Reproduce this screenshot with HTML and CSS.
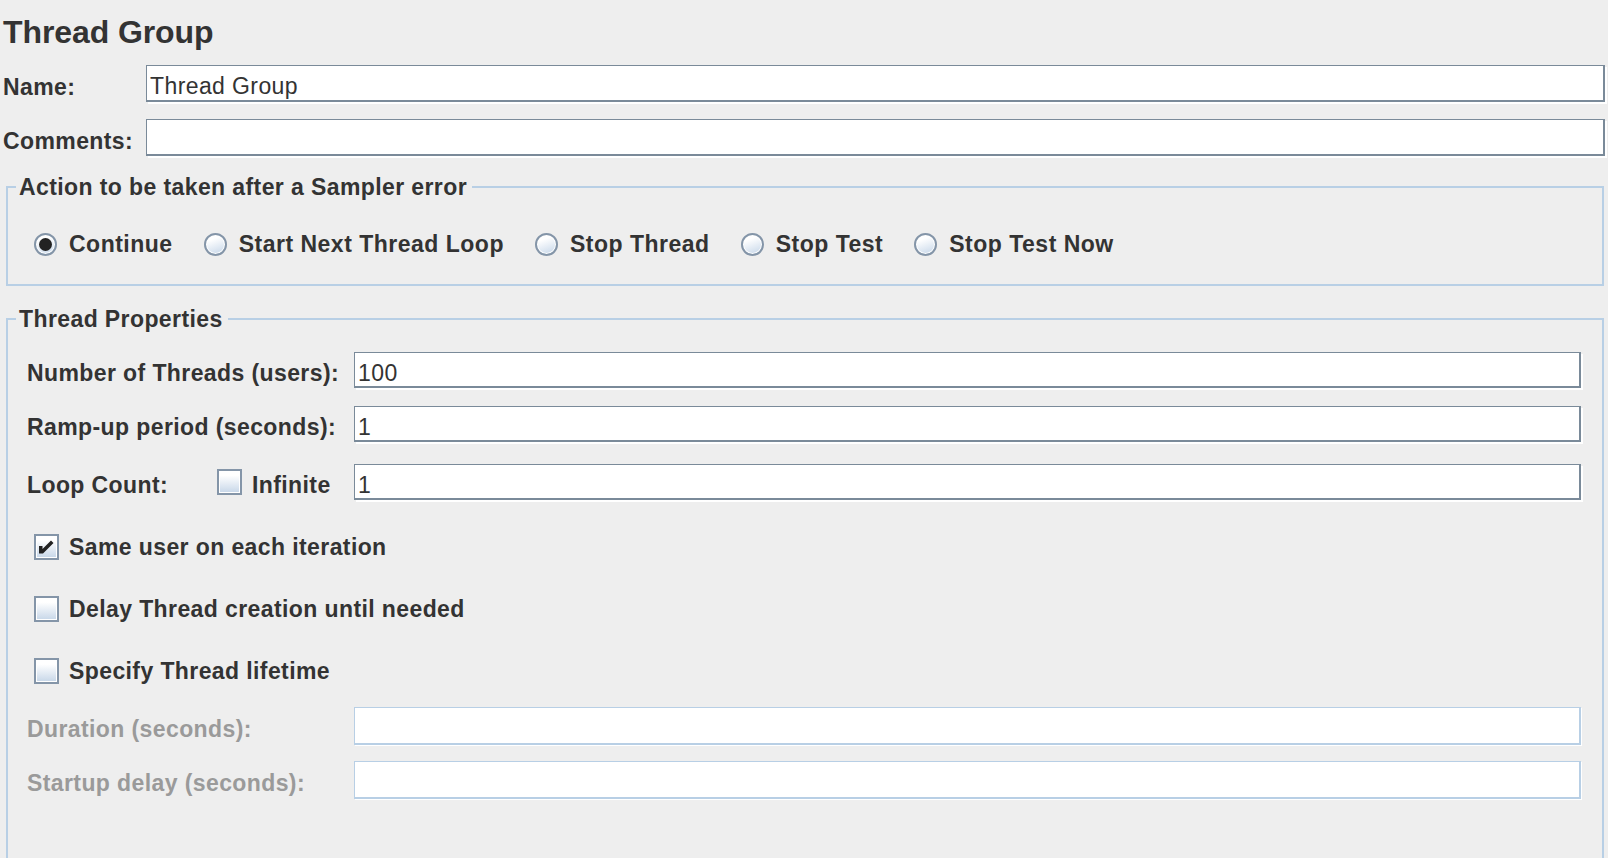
FILE: index.html
```html
<!DOCTYPE html>
<html>
<head>
  <meta charset="UTF-8">
  <title>Thread Group</title>
  <link rel="stylesheet" href="styles.css">
</head>
<body>
  <div class="panel">
    <!-- 标题 -->
    <h1 class="panel-title">Thread Group</h1>

    <div class="name-row">
      <label class="name-label">Name:</label>
      <input type="text" class="text-field" value="Thread Group">
    </div>
    <div class="name-row comments-row">
      <label class="name-label">Comments:</label>
      <input type="text" class="text-field" value="">
    </div>

    <!-- 取样器错误后的动作 -->
    <fieldset class="group action-group">
      <legend>Action to be taken after a Sampler error</legend>
      <div class="radio-row">
        <span class="radio-item"><span class="radio checked"></span>Continue</span>
        <span class="radio-item"><span class="radio"></span>Start Next Thread Loop</span>
        <span class="radio-item"><span class="radio"></span>Stop Thread</span>
        <span class="radio-item"><span class="radio"></span>Stop Test</span>
        <span class="radio-item"><span class="radio"></span>Stop Test Now</span>
      </div>
    </fieldset>

    <!-- 线程属性 -->
    <fieldset class="group props-group">
      <legend>Thread Properties</legend>
      <div class="props-body">
        <div class="field-row">
          <label class="field-label">Number of Threads (users):</label>
          <input type="text" class="text-field" value="100">
        </div>
        <div class="field-row ramp-row">
          <label class="field-label">Ramp-up period (seconds):</label>
          <input type="text" class="text-field" value="1">
        </div>
        <div class="field-row loop-row">
          <div class="field-label loop-label">
            <span class="loop-text">Loop Count:</span>
            <span class="checkbox"></span>
            <span class="infinite-text">Infinite</span>
          </div>
          <input type="text" class="text-field" value="1">
        </div>

        <div class="check-row first-check">
          <span class="checkbox">
            <svg width="21" height="22" viewBox="0 0 21 22"><polygon points="3,10 6.5,10 6.5,13 15,4.5 17.5,7 7,17.5 3,17.5" fill="#222"/></svg>
          </span>
          Same user on each iteration
        </div>
        <div class="check-row">
          <span class="checkbox"></span>
          Delay Thread creation until needed
        </div>
        <div class="check-row">
          <span class="checkbox"></span>
          Specify Thread lifetime
        </div>

        <div class="field-row disabled duration-row">
          <label class="field-label">Duration (seconds):</label>
          <input type="text" class="text-field" value="" disabled>
        </div>
        <div class="field-row disabled startup-row">
          <label class="field-label">Startup delay (seconds):</label>
          <input type="text" class="text-field" value="" disabled>
        </div>
      </div>
    </fieldset>
  </div>
</body>
</html>
```

FILE: styles.css
```css
html, body {
  margin: 0;
  padding: 0;
  height: 100%;
  overflow: hidden;
}

body {
  background-color: #eeeeee;
  color: #333333;
  font-family: "Liberation Sans", Arial, sans-serif;
  font-size: 23px;
  font-weight: bold;
  letter-spacing: 0.4px;
}

.panel {
  display: flex;
  flex-direction: column;
}

/* 标题 */
.panel-title {
  margin: 0;
  padding: 12px 0 0 3px;
  font-size: 32px;
  line-height: 40px;
  letter-spacing: -0.1px;
}

/* 名称 / 注释 */
.name-row {
  display: flex;
  align-items: center;
  height: 37px;
  margin-top: 13px;
  padding: 0 3px;
}

.comments-row {
  margin-top: 17px;
}

.name-label {
  width: 143px;
  flex-shrink: 0;
  padding-top: 7px;
}

.text-field {
  flex: 1;
  min-width: 0;
  height: 100%;
  box-sizing: border-box;
  margin: 0;
  padding: 7px 3px 0 3px;
  border-style: solid;
  border-color: #7a8a99;
  border-width: 1px 2px 2px 1px;
  box-shadow: 2px 2px 0 #ffffff;
  background-color: #ffffff;
  color: #333333;
  font-family: "Liberation Sans", Arial, sans-serif;
  font-size: 23px;
  font-weight: normal;
  letter-spacing: 0.4px;
  outline: none;
}

/* 分组框 */
.group {
  margin: 0 4px 0 6px;
  padding: 0;
  min-width: 0;
  border: 2px solid #b8cfe5;
}

.group legend {
  margin-left: 8px;
  padding: 1px 5px 0 3px;
  line-height: 28px;
}

.action-group {
  margin-top: 16px;
}

.radio-row {
  display: flex;
  align-items: center;
  gap: 31px;
  height: 30px;
  padding: 28px 0 25px 26px;
  letter-spacing: 0.5px;
}

.radio-item {
  display: flex;
  align-items: center;
  gap: 12px;
}

.radio {
  width: 23px;
  height: 23px;
  box-sizing: border-box;
  border: 2px solid #8495a8;
  border-radius: 50%;
  background: linear-gradient(160deg, #ffffff 25%, #c4d5e8 100%);
  box-shadow: inset 0 0 0 1px #ffffff;
  display: flex;
  justify-content: center;
  align-items: center;
}

.radio.checked::after {
  content: "";
  width: 13px;
  height: 13px;
  border-radius: 50%;
  background-color: #222222;
}

/* 线程属性 */
.props-group {
  margin-top: 18px;
}

.props-body {
  display: flex;
  flex-direction: column;
  padding: 19px 21px 80px 19px;
}

.field-row {
  display: flex;
  align-items: center;
  height: 36px;
}

.field-label {
  width: 327px;
  flex-shrink: 0;
  display: flex;
  align-items: center;
  padding-top: 7px;
  box-sizing: border-box;
}

.loop-label {
  padding-top: 0;
}

.loop-text,
.infinite-text {
  padding-top: 6px;
}

.ramp-row {
  margin-top: 18px;
}

.loop-row {
  margin-top: 22px;
}

.loop-text {
  width: 190px;
}

.infinite-text {
  margin-left: 10px;
}

.checkbox {
  width: 25px;
  height: 26px;
  box-sizing: border-box;
  border: 2px solid #8495a8;
  background: linear-gradient(180deg, #ffffff 20%, #c6d6e8 100%);
  box-shadow: inset 0 0 0 1px #ffffff;
  display: flex;
  justify-content: center;
  align-items: center;
  flex-shrink: 0;
}

.check-row {
  display: flex;
  align-items: center;
  gap: 10px;
  height: 26px;
  margin-top: 36px;
  padding-left: 7px;
}

.first-check {
  margin-top: 34px;
}

.duration-row {
  height: 38px;
  margin-top: 23px;
}

.startup-row {
  height: 38px;
  margin-top: 16px;
}

.disabled .field-label {
  color: #9a9a9a;
}

.disabled .text-field {
  border-color: #b8cfe5;
  box-shadow: 1px 1px 0 #ffffff;
}
```
